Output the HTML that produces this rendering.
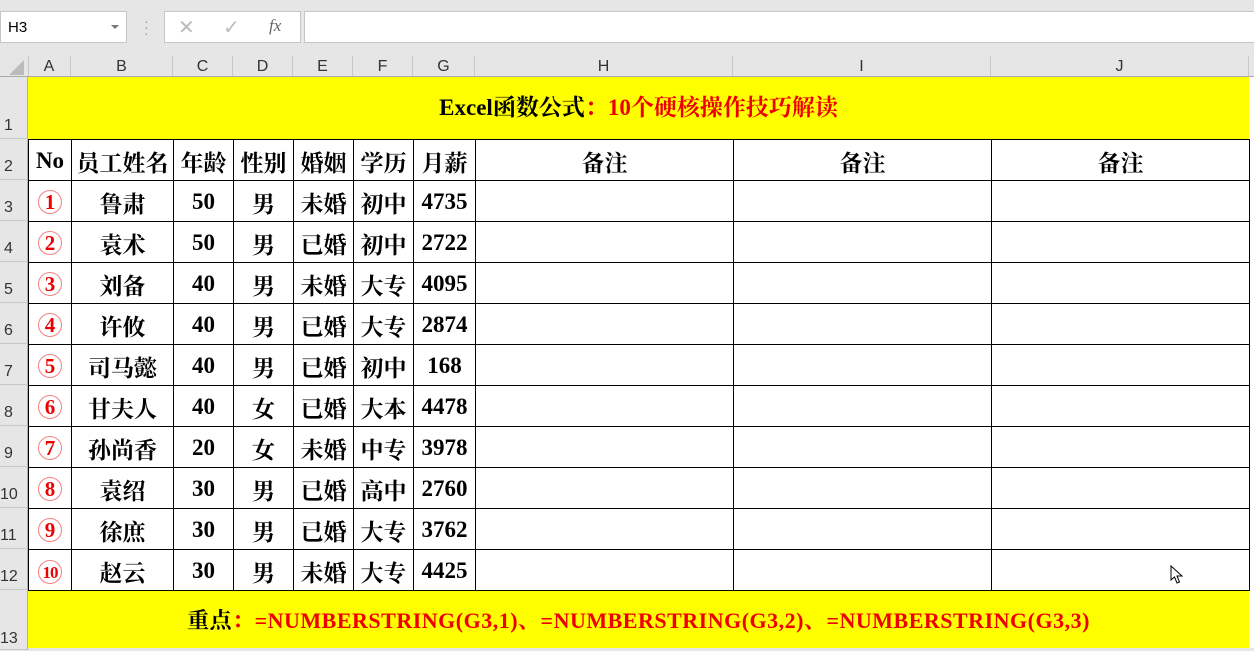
<!DOCTYPE html>
<html><head><meta charset="utf-8"><style>
body{margin:0;width:1254px;height:648px;overflow:hidden;background:#e6e6e6;font-family:"Liberation Sans",sans-serif;position:relative}
.abs{position:absolute}
.box{position:absolute;background:#fff;border:1px solid #c6c6c6;box-sizing:border-box}
.ch{position:absolute;top:56px;height:21px;font-size:16px;color:#333;text-align:center;line-height:22px;border-right:1px solid #c8c8c8;box-sizing:border-box}
.rh{position:absolute;left:0;width:28px;font-size:16px;color:#333;box-sizing:border-box;border-bottom:1px solid #c8c8c8;border-right:1px solid #b0b0b0;padding-left:4px}
table{position:absolute;left:28px;top:139px;border-collapse:collapse;table-layout:fixed;background:#fff}
tr{height:41px}
td{border:1px solid #000;height:41px;padding:2px 0 0 0;box-sizing:border-box;text-align:center;font-family:"Liberation Serif","Noto Serif CJK SC",serif;font-weight:bold;font-size:23px;color:#000;overflow:hidden;white-space:nowrap}
.c{display:inline-block;width:22px;height:22px;border:1px solid #f28080;border-radius:50%;color:#e00;font-size:21px;line-height:23px;text-align:center}
.y{position:absolute;background:#ff0;left:28px;width:1221px;font-family:"Liberation Serif","Noto Serif CJK SC",serif;font-weight:bold;text-align:center}
</style></head><body>
<div class="box" style="left:0;top:11px;width:127px;height:32px;font-size:15px;padding:7px 0 0 7px">H3<span class="abs" style="left:110px;top:13px;width:0;height:0;border-left:4px solid transparent;border-right:4px solid transparent;border-top:4px solid #777"></span></div>
<div class="abs" style="left:144px;top:18px;color:#999;font-size:14px;line-height:6px">·<br>·<br>·</div>
<div class="box" style="left:164px;top:11px;width:137px;height:32px">
<span class="abs" style="left:13px;top:3px;font-size:20px;color:#bbb">✕</span>
<span class="abs" style="left:58px;top:3px;font-size:20px;color:#bbb">✓</span>
<span class="abs" style="left:104px;top:4px;font-size:17px;color:#666;font-style:italic;font-family:'Liberation Serif',serif">fx</span></div>
<div class="box" style="left:304px;top:11px;width:952px;height:32px"></div>
<div class="abs" style="left:0;top:56px;width:28px;height:21px;border-right:1px solid #c8c8c8"><span class="abs" style="left:9px;top:4px;width:0;height:0;border-left:15px solid transparent;border-bottom:15px solid #bbb"></span></div>
<div class="ch" style="left:28px;width:43px">A</div><div class="ch" style="left:71px;width:102px">B</div><div class="ch" style="left:173px;width:60px">C</div><div class="ch" style="left:233px;width:60px">D</div><div class="ch" style="left:293px;width:60px">E</div><div class="ch" style="left:353px;width:60px">F</div><div class="ch" style="left:413px;width:62px">G</div><div class="ch" style="left:475px;width:258px">H</div><div class="ch" style="left:733px;width:258px">I</div><div class="ch" style="left:991px;width:258px">J</div>
<div class="abs" style="left:0;top:76px;width:1254px;height:1px;background:#aaa"></div>
<div class="rh" style="top:77px;height:62px;padding-top:40px">1</div>
<div class="rh" style="top:139px;height:41px;padding-top:19px">2</div>
<div class="rh" style="top:180px;height:41px;padding-top:19px">3</div>
<div class="rh" style="top:221px;height:41px;padding-top:19px">4</div>
<div class="rh" style="top:262px;height:41px;padding-top:19px">5</div>
<div class="rh" style="top:303px;height:41px;padding-top:19px">6</div>
<div class="rh" style="top:344px;height:41px;padding-top:19px">7</div>
<div class="rh" style="top:385px;height:41px;padding-top:19px">8</div>
<div class="rh" style="top:426px;height:41px;padding-top:19px">9</div>
<div class="rh" style="top:467px;height:41px;padding-top:19px;padding-left:0">10</div>
<div class="rh" style="top:508px;height:41px;padding-top:19px;padding-left:0">11</div>
<div class="rh" style="top:549px;height:41px;padding-top:19px;padding-left:0">12</div>
<div class="rh" style="top:590px;height:60px;padding-top:40px;padding-left:0">13</div>
<div class="abs" style="left:1249px;top:77px;width:5px;height:571px;background:#fff"></div>
<div class="y" style="top:77px;height:62px;line-height:62px;font-size:23px">Excel函数公式<span style="color:#e00">：10个硬核操作技巧解读</span></div>
<table>
<colgroup><col style="width:43px"><col style="width:102px"><col style="width:60px"><col style="width:60px"><col style="width:60px"><col style="width:60px"><col style="width:62px"><col style="width:258px"><col style="width:258px"><col style="width:258px"></colgroup>
<tr><td>No</td><td>员工姓名</td><td>年龄</td><td>性别</td><td>婚姻</td><td>学历</td><td>月薪</td><td>备注</td><td>备注</td><td>备注</td></tr>
<tr><td><span class="c">1</span></td><td>鲁肃</td><td>50</td><td>男</td><td>未婚</td><td>初中</td><td>4735</td><td></td><td></td><td></td></tr>
<tr><td><span class="c">2</span></td><td>袁术</td><td>50</td><td>男</td><td>已婚</td><td>初中</td><td>2722</td><td></td><td></td><td></td></tr>
<tr><td><span class="c">3</span></td><td>刘备</td><td>40</td><td>男</td><td>未婚</td><td>大专</td><td>4095</td><td></td><td></td><td></td></tr>
<tr><td><span class="c">4</span></td><td>许攸</td><td>40</td><td>男</td><td>已婚</td><td>大专</td><td>2874</td><td></td><td></td><td></td></tr>
<tr><td><span class="c">5</span></td><td>司马懿</td><td>40</td><td>男</td><td>已婚</td><td>初中</td><td>168</td><td></td><td></td><td></td></tr>
<tr><td><span class="c">6</span></td><td>甘夫人</td><td>40</td><td>女</td><td>已婚</td><td>大本</td><td>4478</td><td></td><td></td><td></td></tr>
<tr><td><span class="c">7</span></td><td>孙尚香</td><td>20</td><td>女</td><td>未婚</td><td>中专</td><td>3978</td><td></td><td></td><td></td></tr>
<tr><td><span class="c">8</span></td><td>袁绍</td><td>30</td><td>男</td><td>已婚</td><td>高中</td><td>2760</td><td></td><td></td><td></td></tr>
<tr><td><span class="c">9</span></td><td>徐庶</td><td>30</td><td>男</td><td>已婚</td><td>大专</td><td>3762</td><td></td><td></td><td></td></tr>
<tr><td><span class="c" style="font-size:17px;letter-spacing:-1px">10</span></td><td>赵云</td><td>30</td><td>男</td><td>未婚</td><td>大专</td><td>4425</td><td></td><td></td><td></td></tr>
</table>
<div class="y" style="top:591px;height:57px;line-height:60px;font-size:22px;letter-spacing:0.5px">重点<span style="color:#e00">：=NUMBERSTRING(G3,1)、=NUMBERSTRING(G3,2)、=NUMBERSTRING(G3,3)</span></div>
<svg class="abs" style="left:1170px;top:565px" width="14" height="20" viewBox="0 0 14 20"><path d="M1 1 L1 15 L4.5 12 L7 18 L9.5 17 L7 11 L12 11 Z" fill="#fff" stroke="#000" stroke-width="1"/></svg>
</body></html>
